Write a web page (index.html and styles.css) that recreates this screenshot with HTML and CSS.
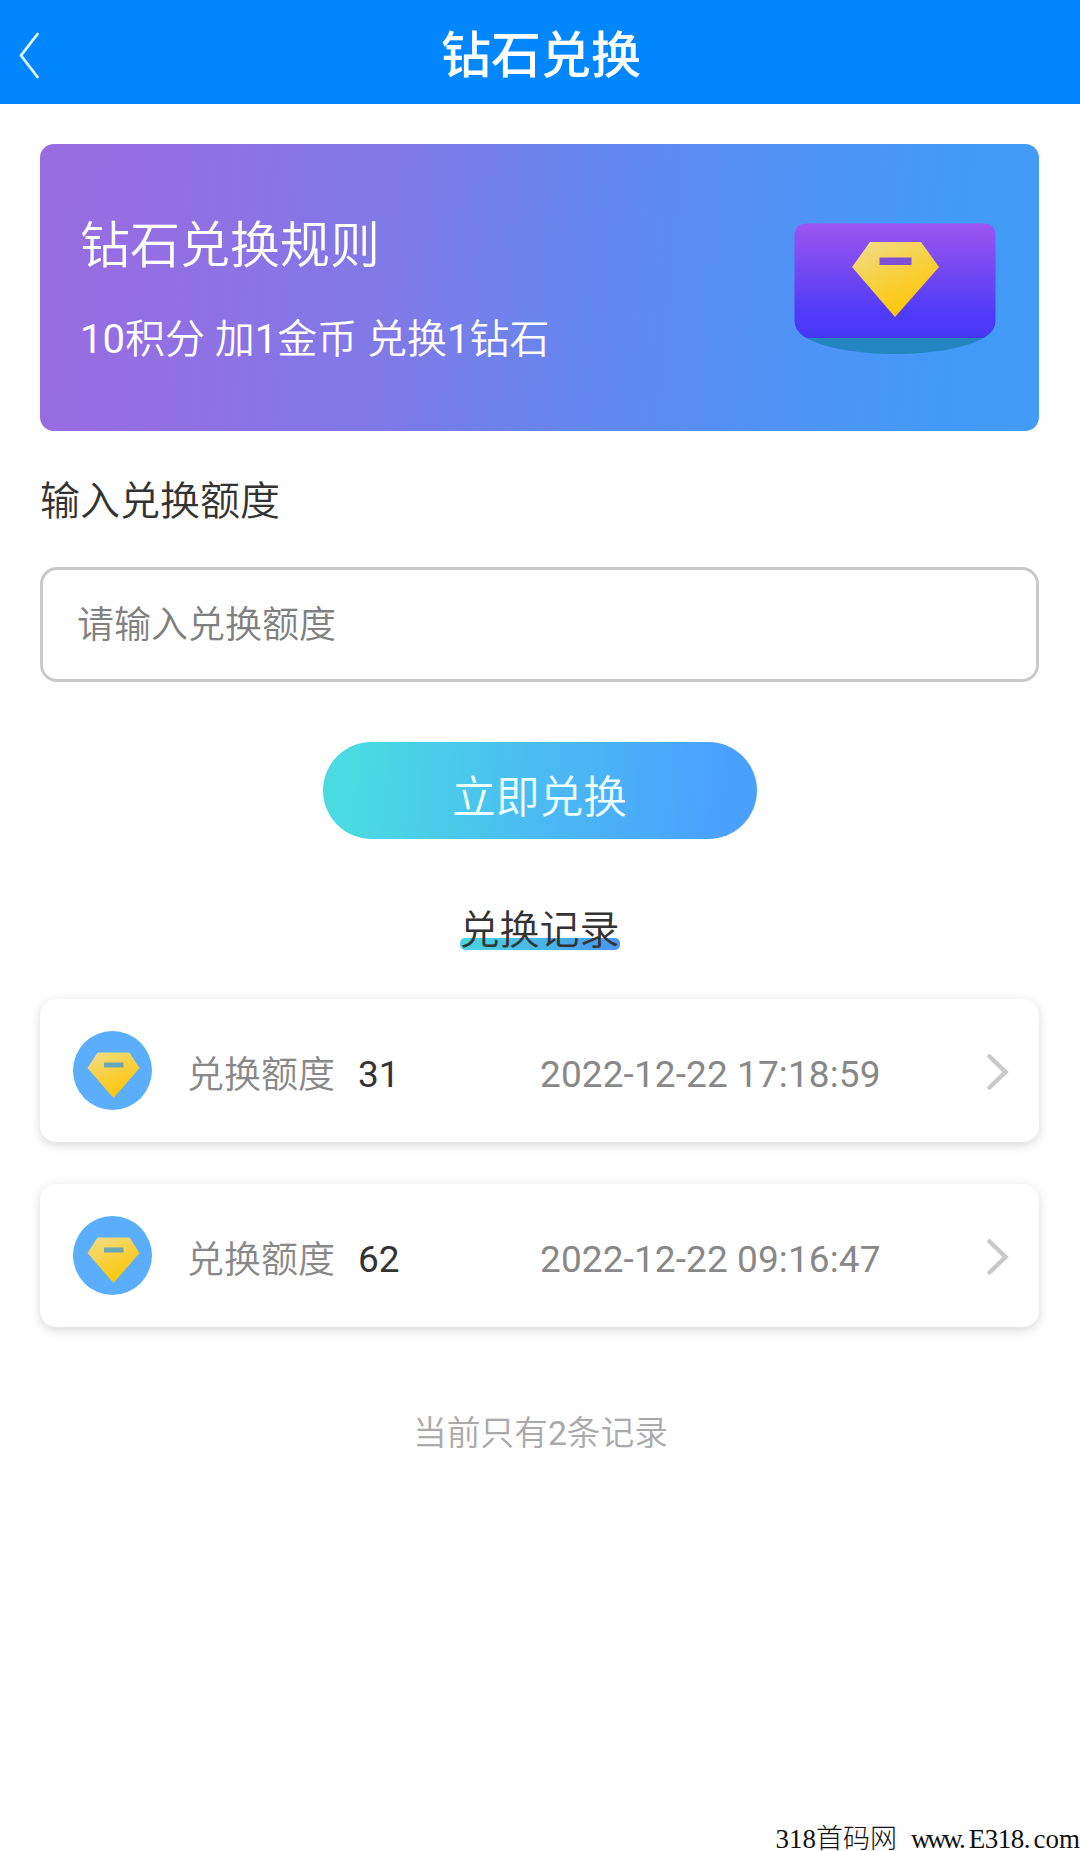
FILE: index.html
```html
<!DOCTYPE html>
<html lang="zh-CN">
<head>
<meta charset="utf-8">
<title>钻石兑换</title>
<link rel="stylesheet" href="styles.css">
</head>
<body>
<svg class="defs" width="0" height="0" aria-hidden="true">
  <defs>
    <linearGradient id="gold" x1="0.15" y1="0" x2="0.6" y2="0.9">
      <stop offset="0" stop-color="#f2dc85"/>
      <stop offset="0.5" stop-color="#f8d142"/>
      <stop offset="1" stop-color="#fdc70c"/>
    </linearGradient>
    <linearGradient id="violet" x1="0" y1="0" x2="0" y2="1">
      <stop offset="0" stop-color="#9b55f0"/>
      <stop offset="0.4" stop-color="#7549f2"/>
      <stop offset="0.8" stop-color="#4f3af8"/>
      <stop offset="1" stop-color="#4638f2"/>
    </linearGradient>
    <symbol id="badge" viewBox="0 0 79 79">
      <circle cx="39.5" cy="39.5" r="39.5" fill="#5aaefb"/>
      <path d="M24.5 21.5H56.5L66.5 37L40.5 67L14.500 37Z" fill="url(#gold)"/>
      <path d="M31 31.500H50.500V36.500H31Z" fill="#6ba6b4"/>
    </symbol>
  </defs>
</svg>
<header class="topbar">
  <svg class="back" width="22" height="48" viewBox="0 0 22 48"><path d="M20.500 2L4 23.500L20.500 45" fill="none" stroke="#e4fbff" stroke-width="2.800" stroke-linecap="round" stroke-linejoin="round"/></svg>
  <h1 class="title">钻石兑换</h1>
</header>
<main class="content">
  <section class="banner">
    <div class="rules">
      <h2 class="rules-title">钻石兑换规则</h2>
      <p class="rules-text"><span class="count">10</span>积分 加<span class="count">1</span>金币 兑换<span class="count">1</span>钻石</p>
    </div>
    <svg class="banner-art" width="202" height="134" viewBox="0 0 202 134">
      <ellipse cx="101" cy="103" rx="98" ry="28" fill="#2386c1"/>
      <path d="M13 0.500H189Q201.500 0.500 201.500 13V98Q201.500 108 190 115H12Q0.500 108 0.500 98V13Q0.500 0.500 13 0.500Z" fill="url(#violet)"/>
      <path d="M76 19H127L145 44L101 94L58 44Z" fill="url(#gold)"/>
      <path d="M85.500 34.500H117.500V42H85.500Z" fill="#7d50d6"/>
    </svg>
  </section>
  <label class="label" for="amount">输入兑换额度</label>
  <input class="field" id="amount" type="text" placeholder="请输入兑换额度">
  <button class="submit" type="button">立即兑换</button>
  <h3 class="heading"><span class="heading-text">兑换记录</span></h3>
  <div class="records">
    <article class="record">
      <svg class="icon" width="79" height="79"><use href="#badge"/></svg>
      <span class="name">兑换额度</span>
      <span class="amount">31</span>
      <time class="time">2022-12-22 17:18:59</time>
      <svg class="arrow" width="24" height="38" viewBox="0 0 24 38"><path d="M3.500 3.500L19.500 19L3.500 34.500" fill="none" stroke="#c9c9c9" stroke-width="4.500" stroke-linecap="round"/></svg>
    </article>
    <article class="record">
      <svg class="icon" width="79" height="79"><use href="#badge"/></svg>
      <span class="name">兑换额度</span>
      <span class="amount">62</span>
      <time class="time">2022-12-22 09:16:47</time>
      <svg class="arrow" width="24" height="38" viewBox="0 0 24 38"><path d="M3.500 3.500L19.500 19L3.500 34.500" fill="none" stroke="#c9c9c9" stroke-width="4.500" stroke-linecap="round"/></svg>
    </article>
  </div>
  <p class="summary">当前只有<span class="count">2</span>条记录</p>
</main>
<footer class="site"><span>318首码网</span><span><span class="tight">www</span><span class="dot">.</span><span class="code">E318</span><span class="dot">.</span>com</span></footer>
</body>
</html>
```
FILE: styles.css
```css
* { box-sizing: border-box; }
body {
  margin: 0;
  height: 1851px;
  display: flex;
  flex-direction: column;
  background: #fefefe;
  color: #333;
  font-family: Roboto, "Noto Sans CJK SC", sans-serif;
  font-weight: 350;
  overflow: hidden;
}
h1, h2, h3, p { margin: 0; font-weight: inherit; }
svg { display: block; flex: none; }
.defs { position: absolute; }
.topbar {
  height: 104px;
  flex: none;
  display: grid;
  grid-template-columns: 60px 1fr 60px;
  align-items: center;
  padding-top: 7px;
  background: #0087ff;
}
.back { margin-left: 17px; }
.title {
  color: #fff;
  font-size: 50px;
  line-height: 60px;
  font-weight: 500;
  text-align: center;
  padding-left: 2px;
}
.content {
  flex: 1;
  display: flex;
  flex-direction: column;
  padding: 40px 41px 0 40px;
}
.banner {
  height: 287px;
  display: flex;
  justify-content: space-between;
  align-items: flex-start;
  padding: 72px 43px 0 40px;
  border-radius: 14px;
  background: linear-gradient(95deg, #986ce1 0%, #966de2 8%, #7f7ae7 36%, #6487ee 55%, #5191f4 72%, #429af8 90%, #429bf6 100%);
  color: #fff;
}
.rules { display: flex; flex-direction: column; gap: 34px; }
.rules-title { font-size: 50px; line-height: 60px; }
.rules-text { font-size: 40px; line-height: 60px; }
.banner-art { margin-top: 7px; }
.label { margin-top: 41px; font-size: 40px; line-height: 60px; }
.field {
  height: 115px;
  margin-top: 35px;
  padding: 1px 34px 0;
  border: 3px solid #c9c9c9;
  border-radius: 17px;
  background: #fefefe;
  font: inherit;
  font-size: 37px;
}
.field::placeholder { color: #808080; opacity: 1; }
.submit {
  align-self: center;
  width: 434px;
  height: 97px;
  margin-top: 60px;
  padding: 7px 0 0;
  border: 0;
  border-radius: 49px;
  background: linear-gradient(95deg, #49dae2 8%, #4bbbf2 50%, #4aa0ff 92%);
  color: #f0ffff;
  font: inherit;
  font-size: 43.800px;
}
.heading {
  align-self: center;
  display: grid;
  margin-top: 62px;
  font-size: 40px;
  line-height: 60px;
}
.heading-text, .heading::before { grid-area: 1 / 1; }
.heading::before {
  content: "";
  height: 12px;
  margin-top: 37px;
  border-radius: 5px;
  background: linear-gradient(90deg, #49d5e0, #4a96ef);
}
.heading-text { z-index: 1; }
.records { display: grid; gap: 42px; margin-top: 38px; }
.record {
  height: 143px;
  display: grid;
  grid-template-columns: 79px 148px 181px 1fr 24px;
  align-items: center;
  padding: 0 29px 0 33px;
  border-radius: 16px;
  background: #fff;
  box-shadow: 0 3px 10px rgba(0, 0, 0, .15);
  font-size: 37px;
  line-height: 54px;
}
.name, .time { color: #888; }
.name { padding-top: 11px; margin-left: 35px; white-space: nowrap; }
.amount { padding-top: 8px; margin-left: 58px; font-weight: 400; }
.time { padding-top: 8px; margin-left: 59px; font-weight: 400; white-space: nowrap; letter-spacing: .1px; }
.arrow { margin-top: 3px; }
.summary {
  align-self: center;
  margin-top: 82px;
  padding-left: 2px;
  font-size: 33.700px;
  line-height: 50px;
  color: #aaa;
}
.count { font-weight: 400; }
.site {
  flex: none;
  display: flex;
  justify-content: flex-end;
  gap: 14px;
  height: 29px;
  padding: 3px 0 0;
  font: 27px/29px "Liberation Serif", "Noto Sans CJK SC", serif;
  font-weight: 300;
  color: #111;
}
.tight { letter-spacing: -3.500px; }
.dot { letter-spacing: 3px; }
.code { letter-spacing: -.5px; }
```
